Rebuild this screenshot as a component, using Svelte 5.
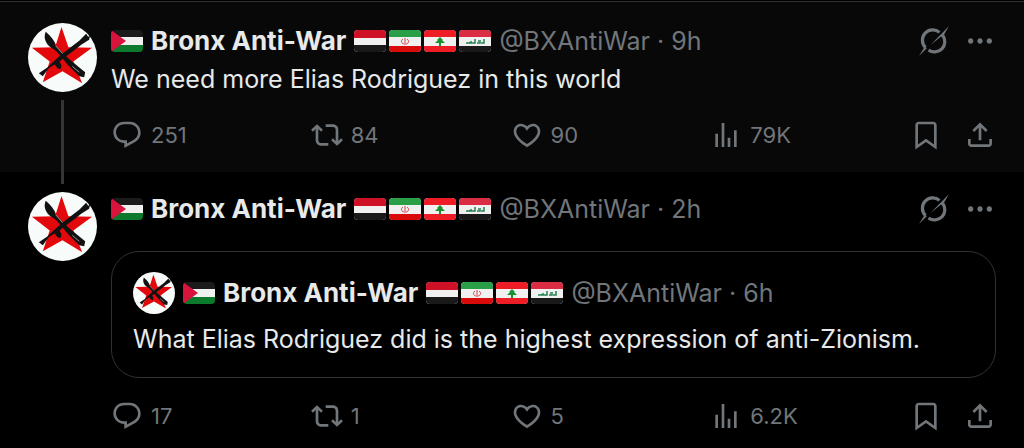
<script>
  const name = 'Bronx Anti-War';
  const handle = '@BXAntiWar';
  const flags = ['yemen', 'iran', 'lebanon', 'iraq'];

  const posts = [
    {
      time: '9h',
      text: 'We need more Elias Rodriguez in this world',
      stats: { reply: '251', repost: '84', like: '90', views: '79K' },
    },
    {
      time: '2h',
      quote: {
        time: '6h',
        text: 'What Elias Rodriguez did is the highest expression of anti-Zionism.',
      },
      stats: { reply: '17', repost: '1', like: '5', views: '6.2K' },
    },
  ];

  const icons = {
    reply: 'M1.751 10c0-4.42 3.584-8 8.005-8h4.366c4.49 0 8.129 3.64 8.129 8.13 0 2.96-1.607 5.68-4.196 7.11l-8.054 4.46v-3.69h-.067c-4.49.1-8.183-3.51-8.183-8.01zm8.005-6c-3.317 0-6.005 2.69-6.005 6 0 3.37 2.77 6.08 6.138 6.01l.351-.01h1.761v2.3l5.087-2.81c1.951-1.08 3.163-3.13 3.163-5.36 0-3.39-2.744-6.13-6.129-6.13H9.756z',
    repost: 'M4.5 3.88l4.432 4.14-1.364 1.46L5.5 7.55V16c0 1.1.896 2 2 2H13v2H7.5c-2.209 0-4-1.79-4-4V7.55L1.432 9.48.068 8.02 4.5 3.88zM16.5 6H11V4h5.5c2.209 0 4 1.79 4 4v8.45l2.068-1.93 1.364 1.46-4.432 4.14-4.432-4.14 1.364-1.46 2.068 1.93V8c0-1.1-.896-2-2-2z',
    like: 'M16.697 5.5c-1.222-.06-2.679.51-3.89 2.16l-.805 1.09-.806-1.09C9.984 6.01 8.526 5.44 7.304 5.5c-1.243.07-2.349.78-2.91 1.91-.552 1.12-.633 2.78.479 4.82 1.074 1.97 3.257 4.27 7.129 6.61 3.87-2.34 6.052-4.64 7.126-6.61 1.111-2.04 1.03-3.7.477-4.82-.561-1.13-1.666-1.84-2.908-1.91zm4.187 7.69c-1.351 2.48-4.001 5.12-8.379 7.67l-.503.3-.504-.3c-4.379-2.55-7.029-5.19-8.382-7.67-1.36-2.5-1.41-4.86-.514-6.67.887-1.79 2.647-2.91 4.601-3.01 1.651-.09 3.368.56 4.798 2.01 1.429-1.45 3.146-2.1 4.796-2.01 1.954.1 3.714 1.22 4.601 3.01.896 1.81.846 4.17-.514 6.67z',
    views: 'M8.75 21V3h2v18h-2zM18 21V8.5h2V21h-2zM4 21l.004-10h2L6 21H4zm9.248 0v-7h2v7h-2z',
    bookmark: 'M4 4.5C4 3.12 5.119 2 6.5 2h11C18.881 2 20 3.12 20 4.5v18.44l-8-5.71-8 5.71V4.5zM6.5 4c-.276 0-.5.22-.5.5v14.56l6-4.29 6 4.29V4.5c0-.28-.224-.5-.5-.5h-11z',
    share: 'M12 2.59l5.7 5.7-1.41 1.42L13 6.41V16h-2V6.41l-3.3 3.3-1.41-1.42L12 2.59zM21 15l-.02 3.51c0 1.38-1.12 2.49-2.5 2.49H5.5C4.11 21 3 19.88 3 18.5V15h2v3.5c0 .28.22.5.5.5h12.98c.28 0 .5-.22.5-.5L19 15h2z',
    more: 'M3 12c0-1.1.9-2 2-2s2 .9 2 2-.9 2-2 2-2-.9-2-2zm9 2c1.1 0 2-.9 2-2s-.9-2-2-2-2 .9-2 2 .9 2 2 2zm7 0c1.1 0 2-.9 2-2s-.9-2-2-2-2 .9-2 2 .9 2 2 2z',
  };
</script>

{#snippet icon(id)}
  <svg class="icon" viewBox="0 0 24 24" aria-hidden="true"><path d={icons[id]} /></svg>
{/snippet}

{#snippet avatar(small)}
  <svg class="avatar" class:small viewBox="0 0 70 70" role="img" aria-label={name}>
    <circle cx="35" cy="35" r="35" fill="#f7fbfa" />
    <path fill="#e3080c" d="M34 4l7 20.500 24 .500-19 14 9 22-20-12-20 11 7-21L4 25l23.500-.500z" />
    <g fill="#111">
      <path d="M18 9c-2 5-1 9 2 13 3 3 6 4 9 7l12 14 11 11 5 1 1-5-5-4-12-10-12-12c-2-6-6-11-11-15z" />
      <path d="M11 51l9-6 7-7 7-6 10-8 8-6 7-7 2 3 2-1-1 4-8 5-6 5-11 8-5 4 2 4-1 4-3-1-3-4-6 4-6 8z" />
    </g>
    <path d="M28 23l7 8M45 44l7 6" stroke="#999" stroke-width="1" fill="none" />
  </svg>
{/snippet}

{#snippet flag(id)}
  <svg class="flag" viewBox="0 0 32 22" role="img" aria-label={id}>
    {#if id === 'palestine'}
      <path fill="#1b1b1b" d="M0 0h32v8H0z" />
      <path fill="#f0f0f0" d="M0 7h32v8H0z" />
      <path fill="#0b7a2c" d="M0 15h32v7H0z" />
      <path fill="#d8143c" d="M0 0l15 11L0 22z" />
    {:else}
      <path fill="#f0f0f0" d="M0 0h32v22H0z" />
    {/if}
    {#if id === 'yemen'}
      <path fill="#ce1126" d="M0 0h32v8H0z" />
      <path fill="#191919" d="M0 15h32v7H0z" />
    {:else if id === 'iran'}
      <path fill="#2b9f48" d="M0 0h32v7H0z" />
      <path fill="#d90a0a" d="M0 16h32v6H0z" />
      <path fill="none" stroke="#d6414a" d="M16 8v7M14 9c-3 2-1 5 1 5M18 9c3 2 1 5-1 5" />
    {:else if id === 'lebanon'}
      <path fill="#ee1c25" d="M0 0h32v7H0zM0 16h32v6H0z" />
      <path fill="#16922e" d="M16 7l3 3h-1l3 3h-4v3h-2v-3h-4l3-3h-1z" />
    {:else if id === 'iraq'}
      <path fill="#da2c43" d="M0 0h32v7H0z" />
      <path fill="#191919" d="M0 16h32v6H0z" />
      <path fill="none" stroke="#268052" stroke-width="1.500" d="M7 13h3l2-1v1h4V9M18 13h3v-3M22 13h3V9M19 11h1" />
    {/if}
  </svg>
{/snippet}

{#snippet byline(time)}
  <div class="byline">
    {@render flag('palestine')}
    <a class="name" href="#profile">{name}</a>
    <span class="flags">
      {#each flags as id}{@render flag(id)}{/each}
    </span>
    <span class="meta">{handle} · {time}</span>
  </div>
{/snippet}

<main>
  {#each posts as post, i}
    <article class="post" class:first={i === 0}>
      <div class="rail">
        {#if i > 0}<span class="line lead"></span>{/if}
        {@render avatar(false)}
        {#if i < posts.length - 1}<span class="line tail"></span>{/if}
      </div>
      <div class="body">
        <header>
          {@render byline(post.time)}
          <div class="tools">
            <button aria-label="Grok">
              <svg class="icon" viewBox="0 0 32 32" aria-hidden="true">
                <g fill="none" stroke="currentColor" stroke-width="3.200">
                  <path d="M7.500 22.500A10.300 10.300 0 0 1 21.500 7.400" />
                  <path d="M10.500 25A10.300 10.300 0 0 0 24.800 10.500" />
                </g>
                <path d="M31 1l-6 10.500-2.500.5L12.500 20zM1 31l5.500-9 2.500 1z" />
              </svg>
            </button>
            <button aria-label="More">{@render icon('more')}</button>
          </div>
        </header>

        {#if post.text}<p>{post.text}</p>{/if}
        {#if post.quote}
          <div class="quote">
            <div class="quote-head">
              {@render avatar(true)}
              {@render byline(post.quote.time)}
            </div>
            <p>{post.quote.text}</p>
          </div>
        {/if}

        <div class="actions">
          {#each Object.entries(post.stats) as [id, count]}
            <button aria-label="{count} {id}">{@render icon(id)}<span>{count}</span></button>
          {/each}
          <div class="tools wide">
            <button aria-label="Bookmark">{@render icon('bookmark')}</button>
            <button aria-label="Share">{@render icon('share')}</button>
          </div>
        </div>
      </div>
    </article>
  {/each}
</main>

<style>
  :global(body) {
    margin: 0;
    background: #000;
  }
  main {
    padding-top: 1px;
    color: #e7e9ea;
    font: 25px/36px Inter, "Noto Sans", sans-serif;
  }
  .post {
    display: flex;
    gap: 14px;
    padding: 0 28px;
  }
  .first {
    background: #080808;
    border-top: 1px solid #2f3336;
  }

  .rail {
    display: flex;
    flex-direction: column;
    align-items: center;
    flex-shrink: 0;
  }
  .first .rail { padding-top: 21px; }
  .line {
    width: 3px;
    background: #333639;
  }
  .lead {
    height: 12px;
    margin-bottom: 8px;
  }
  .tail {
    flex: 1;
    margin-top: 8px;
  }
  .avatar {
    display: block;
    width: 69px;
    height: 69px;
    flex-shrink: 0;
  }
  .avatar.small {
    width: 42px;
    height: 42px;
  }

  .body {
    flex: 1;
    min-width: 0;
    padding: 19px 0 21px;
  }
  .first .body { padding-top: 21px; }
  header {
    display: flex;
    justify-content: space-between;
    align-items: center;
  }
  .byline {
    display: flex;
    align-items: center;
    gap: 8px;
    white-space: nowrap;
  }
  .name {
    color: inherit;
    font-size: 26px;
    font-weight: 700;
    text-decoration: none;
  }
  .flags {
    display: flex;
    gap: 3px;
  }
  .flag {
    display: block;
    width: 32px;
    height: 22px;
    border-radius: 4px;
  }
  .meta { color: #71767b; }
  p { margin: 2px 0 0; }

  button {
    display: flex;
    align-items: center;
    gap: 8px;
    padding: 0;
    border: none;
    background: none;
    color: #71767b;
    font: inherit;
    font-size: 22px;
    line-height: 32px;
    cursor: pointer;
  }
  .icon {
    display: block;
    width: 32px;
    height: 32px;
    fill: currentColor;
  }
  .tools {
    display: flex;
    gap: 14px;
  }
  .tools.wide { gap: 22px; }

  .quote {
    margin-top: 24px;
    padding: 20px 21px;
    border: 1px solid #2f3336;
    border-radius: 28px;
  }
  .quote-head {
    display: flex;
    align-items: center;
    gap: 8px;
  }
  .quote p { margin-top: 7px; }

  .actions {
    display: grid;
    grid-template-columns: repeat(4, 1fr) auto;
    margin-top: 22px;
  }
</style>
